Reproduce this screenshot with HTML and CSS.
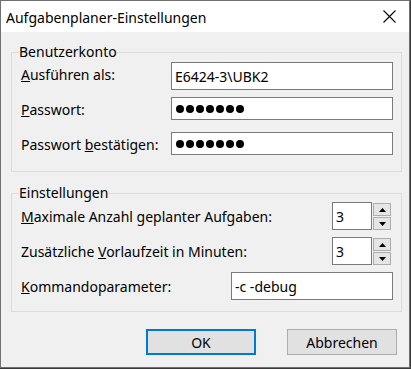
FILE: index.html
```html
<!DOCTYPE html>
<html lang="de">
<head>
    <meta charset="UTF-8">
    <title>Aufgabenplaner-Einstellungen</title>
    <link rel="stylesheet" href="styles.css">
</head>
<body>
    <div class="window">
        <div class="titlebar">
            <span class="title">Aufgabenplaner-Einstellungen</span>
            <svg class="close" width="13" height="13" viewBox="0 0 13 13">
                <path d="M0.5 0.5L12.5 12.5M12.5 0.5L0.5 12.5" stroke="#000" stroke-width="1.1" fill="none"/>
            </svg>
        </div>

        <div class="content">
            <fieldset class="group account">
                <legend>Benutzerkonto</legend>
                <div class="row">
                    <label for="runAs"><u>A</u>usführen als:</label>
                    <input type="text" id="runAs" class="field" value="E6424-3\UBK2">
                </div>
                <div class="row">
                    <label><u>P</u>asswort:</label>
                    <div class="field short password">
                        <span class="dot"></span><span class="dot"></span><span class="dot"></span><span class="dot"></span><span class="dot"></span><span class="dot"></span><span class="dot"></span>
                    </div>
                </div>
                <div class="row">
                    <label>Passwort <u>b</u>estätigen:</label>
                    <div class="field short password">
                        <span class="dot"></span><span class="dot"></span><span class="dot"></span><span class="dot"></span><span class="dot"></span><span class="dot"></span><span class="dot"></span>
                    </div>
                </div>
            </fieldset>

            <fieldset class="group settings">
                <legend>Einstellungen</legend>
                <div class="row">
                    <label for="maxTasks"><u>M</u>aximale Anzahl geplanter Aufgaben:</label>
                    <div class="spin">
                        <input type="text" id="maxTasks" class="field spin-value" value="3">
                        <div class="spin-buttons">
                            <span class="spin-btn"><svg width="7" height="4" viewBox="0 0 7 4"><path d="M3.5 0L7 4H0Z" fill="#000"/></svg></span>
                            <span class="spin-btn"><svg width="7" height="4" viewBox="0 0 7 4"><path d="M0 0H7L3.5 4Z" fill="#000"/></svg></span>
                        </div>
                    </div>
                </div>
                <div class="row">
                    <label for="leadTime">Zusätzliche <u>V</u>orlaufzeit in Minuten:</label>
                    <div class="spin">
                        <input type="text" id="leadTime" class="field spin-value" value="3">
                        <div class="spin-buttons">
                            <span class="spin-btn"><svg width="7" height="4" viewBox="0 0 7 4"><path d="M3.5 0L7 4H0Z" fill="#000"/></svg></span>
                            <span class="spin-btn"><svg width="7" height="4" viewBox="0 0 7 4"><path d="M0 0H7L3.5 4Z" fill="#000"/></svg></span>
                        </div>
                    </div>
                </div>
                <div class="row">
                    <label for="cmdParams"><u>K</u>ommandoparameter:</label>
                    <input type="text" id="cmdParams" class="field params" value="-c -debug">
                </div>
            </fieldset>

            <div class="buttons">
                <button class="btn default">OK</button>
                <button class="btn">Abbrechen</button>
            </div>
        </div>
    </div>
</body>
</html>
```

FILE: styles.css
```css
body {
    margin: 0;
    background-color: #3a3a3a;
    font-family: 'Noto Sans', sans-serif;
    font-size: 14px;
    color: #000;
}
.window {
    width: 408px;
    height: 366px;
    border: 1px solid #707070;
    background-color: #f0f0f0;
    display: flex;
    flex-direction: column;
}
.titlebar {
    height: 31px;
    background-color: #fff;
    display: flex;
    align-items: center;
    padding: 0 13px 0 5px;
}
.title {
    flex-grow: 1;
    padding-top: 1px;
}
.close {
    display: block;
}
.content {
    padding: 15px 7px 0 10px;
}
.group {
    margin: 0;
    border: 1px solid #dcdcdc;
    padding: 0 8px 8px 9px;
    min-width: 0;
}
.group legend {
    padding: 0;
    margin-left: -2px;
    line-height: 10px;
}
.account {
    padding-top: 1px;
}
.settings {
    margin-top: 16px;
}
.row {
    height: 35px;
    display: flex;
    align-items: flex-start;
}
.row label {
    flex-grow: 1;
    line-height: 20px;
    margin-top: 7px;
}
.account .row label {
    flex-grow: 0;
    width: 150px;
}
.settings .row label {
    margin-top: 9px;
}
.field {
    box-sizing: border-box;
    margin: 4px 0 0 0;
    height: 28px;
    width: 222px;
    border: 1px solid #7a7a7a;
    background-color: #fff;
    padding: 0 3px;
    font-family: inherit;
    font-size: 14px;
    color: #000;
    outline: none;
}
.field.short {
    height: 23px;
}
.password {
    display: flex;
    align-items: center;
    padding-left: 4px;
}
.dot {
    width: 8px;
    height: 8px;
    border-radius: 50%;
    background-color: #000;
    margin-right: 2px;
}
.spin {
    display: flex;
    margin-right: 2px;
}
.field.spin-value {
    width: 40px;
}
.spin-buttons {
    margin: 5px 0 0 1px;
    display: flex;
    flex-direction: column;
    gap: 1px;
}
.spin-btn {
    box-sizing: border-box;
    width: 18px;
    height: 13px;
    border: 1px solid #adadad;
    background-color: #e5e5e5;
    display: flex;
    align-items: center;
    justify-content: center;
}
.spin-btn svg {
    display: block;
}
.field.params {
    width: 162px;
}
.buttons {
    display: flex;
    justify-content: flex-end;
    gap: 31px;
    margin-top: 17px;
    padding-right: 5px;
}
.btn {
    box-sizing: border-box;
    width: 110px;
    height: 26px;
    border: 1px solid #adadad;
    background-color: #e1e1e1;
    font-family: inherit;
    font-size: 14px;
    color: #000;
    padding: 0;
}
.btn.default {
    border: 2px solid #0078d7;
}
```
